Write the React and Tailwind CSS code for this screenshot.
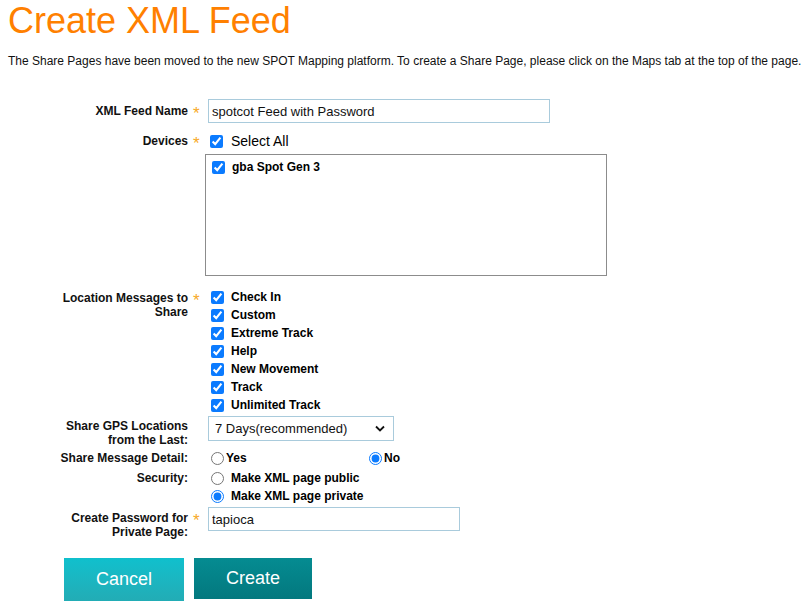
import { useState } from 'react'

const MESSAGE_TYPES = ['Check In', 'Custom', 'Extreme Track', 'Help', 'New Movement', 'Track', 'Unlimited Track']

function Star() {
  return (
    <span className="w-[17px] pl-[5px] text-[17px] leading-[14px] text-[#f7a928] relative top-[3px]">*</span>
  )
}

function Label({ children, star, className = '' }) {
  return (
    <div className={`flex shrink-0 ${className}`}>
      <div className="w-[180px] flex justify-end">
        <div className="w-[130px] text-right font-bold text-[12px] leading-[14px] text-[#111]">{children}</div>
      </div>
      {star ? <Star /> : <span className="w-[17px]" />}
    </div>
  )
}

function Check({ checked = true, onChange }) {
  return (
    <input
      type="checkbox"
      checked={checked}
      onChange={onChange}
      className="m-0 w-[13px] h-[13px] accent-[#0b7bff] shrink-0"
    />
  )
}

export default function App() {
  const [name, setName] = useState('spotcot Feed with Password')
  const [pwd, setPwd] = useState('tapioca')
  const [detail, setDetail] = useState('no')
  const [security, setSecurity] = useState('private')

  return (
    <div className="min-h-screen bg-white text-black px-2" style={{ fontFamily: '"Liberation Sans", Arial, sans-serif' }}>
      <h1 className="text-[36px] leading-[41px] text-[#ff8000] font-normal">Create XML Feed</h1>
      <p className="mt-[13px] text-[12px] leading-[14px] text-[#111]">
        The Share Pages have been moved to the new SPOT Mapping platform. To create a Share Page, please click on the Maps tab at the top of the page.
      </p>

      {/* feed name */}
      <div className="mt-[31px] flex items-center h-[24px]">
        <Label star className="items-center">XML Feed Name</Label>
        <input
          value={name}
          onChange={(e) => setName(e.target.value)}
          className="ml-[3px] w-[342px] h-[24px] border border-[#a9cbdc] px-[3px] text-[13px] text-[#111] outline-none"
        />
      </div>

      {/* devices */}
      <div className="mt-[8px] flex items-center h-[20px]">
        <Label star className="items-center">Devices</Label>
        <div className="ml-[5px] flex items-center gap-[8px]">
          <Check />
          <span className="text-[14px]">Select All</span>
        </div>
      </div>
      <div className="mt-[3px] ml-[197px] w-[402px] h-[122px] border border-[#8c8c8c] pt-[5px] pl-[6px]">
        <div className="flex items-center gap-[7px] h-[14px]">
          <Check />
          <span className="text-[12px] font-bold">gba Spot Gen 3</span>
        </div>
      </div>

      {/* location messages */}
      <div className="mt-[12px] flex">
        <Label star className="pt-[3px]">Location Messages to Share</Label>
        <div className="ml-[6px] flex flex-col">
          {MESSAGE_TYPES.map((m) => (
            <div key={m} className="h-[18px] flex items-center gap-[7px]">
              <Check />
              <span className="text-[12px] font-bold">{m}</span>
            </div>
          ))}
        </div>
      </div>

      {/* gps range */}
      <div className="mt-[2px] flex">
        <Label className="pt-[3px]">Share GPS Locations from the Last:</Label>
        <div className="ml-[3px] w-[186px] h-[25px] border border-[#a9cbdc] flex items-center justify-between pl-[6px] pr-[8px]">
          <span className="text-[13px] text-[#111]">7 Days(recommended)</span>
          <svg width="10" height="7" viewBox="0 0 10 7" fill="none">
            <path d="M1 1.5 L5 5.5 L9 1.5" stroke="#111" strokeWidth="1.8" />
          </svg>
        </div>
      </div>

      {/* message detail */}
      <div className="mt-[2px] flex items-center h-[18px]">
        <Label className="items-center">Share Message Detail:</Label>
        <label className="ml-[6px] flex items-center gap-[2px] w-[158px]">
          <input type="radio" checked={detail === 'yes'} onChange={() => setDetail('yes')} className="m-0 w-[13px] h-[13px] accent-[#0b7bff]" />
          <span className="text-[12px] font-bold">Yes</span>
        </label>
        <label className="flex items-center gap-[2px]">
          <input type="radio" checked={detail === 'no'} onChange={() => setDetail('no')} className="m-0 w-[13px] h-[13px] accent-[#0b7bff]" />
          <span className="text-[12px] font-bold">No</span>
        </label>
      </div>

      {/* security */}
      <div className="mt-[2px] flex">
        <Label className="pt-[2px]">Security:</Label>
        <div className="ml-[6px] flex flex-col">
          <label className="h-[18px] flex items-center gap-[7px]">
            <input type="radio" checked={security === 'public'} onChange={() => setSecurity('public')} className="m-0 w-[13px] h-[13px] accent-[#0b7bff]" />
            <span className="text-[12px] font-bold">Make XML page public</span>
          </label>
          <label className="h-[18px] flex items-center gap-[7px]">
            <input type="radio" checked={security === 'private'} onChange={() => setSecurity('private')} className="m-0 w-[13px] h-[13px] accent-[#0b7bff]" />
            <span className="text-[12px] font-bold">Make XML page private</span>
          </label>
        </div>
      </div>

      {/* password */}
      <div className="mt-[2px] flex">
        <Label star className="pt-[4px]">Create Password for Private Page:</Label>
        <input
          value={pwd}
          onChange={(e) => setPwd(e.target.value)}
          className="ml-[3px] w-[252px] h-[24px] border border-[#a9cbdc] px-[3px] text-[13px] text-[#111] outline-none"
        />
      </div>

      {/* actions */}
      <div className="mt-[19px] ml-[56px] flex items-start gap-[10px]">
        <button type="button" className="w-[120px] h-[43px] bg-gradient-to-b from-[#0fc0cd] to-[#22acb5] text-white text-[18px]">
          Cancel
        </button>
        <button type="button" className="w-[118px] h-[41px] bg-gradient-to-b from-[#058c92] to-[#03787e] text-white text-[18px]">
          Create
        </button>
      </div>
    </div>
  )
}
